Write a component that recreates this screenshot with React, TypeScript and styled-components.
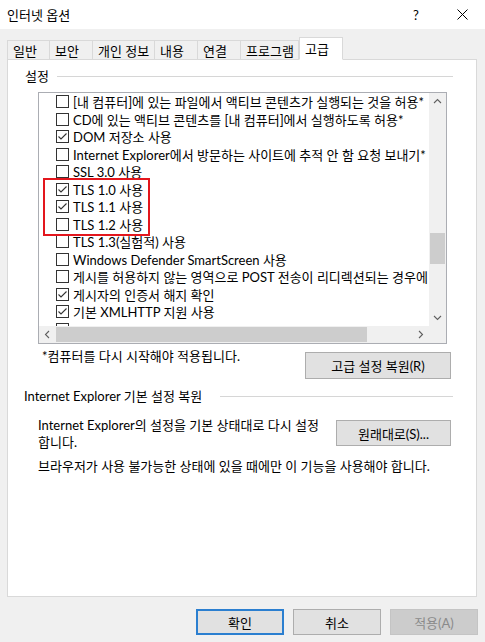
import React from 'react';
import styled, { createGlobalStyle } from 'styled-components';

const GlobalStyle = createGlobalStyle`
  html, body {
    margin: 0;
    padding: 0;
    background: #f0f0f0;
  }
  body {
    font-family: Lato, "Noto Sans CJK KR", sans-serif;
    font-size: 13px;
    color: #000;
  }
  * {
    box-sizing: border-box;
  }
`;

const Window = styled.div`
  width: 485px;
  height: 642px;
  display: flex;
  flex-direction: column;
  background: #f0f0f0;
  overflow: hidden;
`;

const TitleBar = styled.div`
  height: 29px;
  background: #fff;
  display: flex;
  align-items: center;
  padding-left: 7px;
`;

const Title = styled.div`
  flex: 1;
  font-size: 13px;
`;

const TitleButton = styled.div`
  width: 46px;
  height: 29px;
  display: flex;
  align-items: center;
  justify-content: center;
  font-size: 13px;
`;

const Body = styled.div`
  flex: 1;
  display: flex;
  flex-direction: column;
  padding: 8px 7px 7px 7px;
`;

const TabRow = styled.div`
  display: flex;
  align-items: flex-end;
  height: 23px;
  position: relative;
  z-index: 1;
  margin-bottom: -1px;
`;

const Tab = styled.div<{ $width: number; $active?: boolean; $first?: boolean }>`
  width: ${p => p.$width}px;
  height: ${p => (p.$active ? 23 : 20)}px;
  padding-left: 5px;
  display: flex;
  align-items: center;
  background: ${p => (p.$active ? '#fff' : '#f0f0f0')};
  border: 1px solid #d9d9d9;
  border-bottom: ${p => (p.$active ? '1px solid #fff' : '1px solid #d9d9d9')};
  border-left: ${p => (p.$first || p.$active ? '1px solid #d9d9d9' : 'none')};
  white-space: nowrap;
`;

const Panel = styled.div`
  flex: 1;
  margin-right: 1px;
  background: #fff;
  border: 1px solid #d9d9d9;
  padding: 8px 23px 0 17px;
  display: flex;
  flex-direction: column;
`;

const GroupHeader = styled.div`
  display: flex;
  align-items: center;
  height: 17px;
  line-height: 17px;
`;

const GroupLine = styled.div<{ $gap: number }>`
  flex: 1;
  height: 1px;
  background: #d6d6d6;
  margin-left: ${p => p.$gap}px;
  margin-top: -1px;
`;

const ListBox = styled.div`
  position: relative;
  margin: 7px 6px 0 13px;
  height: 252px;
  border: 1px solid #abadb3;
  display: grid;
  grid-template-columns: 1fr 17px;
  grid-template-rows: 1fr 17px;
`;

const ListViewport = styled.div`
  overflow: hidden;
  padding-left: 17px;
`;

const ListItem = styled.div`
  height: 17.5px;
  display: flex;
  align-items: center;
  gap: 4px;
  white-space: nowrap;
`;

const Box = styled.span`
  width: 13px;
  height: 13px;
  flex: none;
  border: 1px solid #333;
  background: #fff;
  display: flex;
  align-items: center;
  justify-content: center;
`;

const VScroll = styled.div`
  background: #f0f0f0;
  display: flex;
  flex-direction: column;
`;

const HScroll = styled.div`
  background: #f0f0f0;
  display: flex;
`;

const Corner = styled.div`
  background: #f0f0f0;
`;

const Arrow = styled.div`
  width: 17px;
  height: 17px;
  flex: none;
  display: flex;
  align-items: center;
  justify-content: center;
`;

const VTrack = styled.div`
  flex: 1;
  padding: 0 1px;
`;

const VThumb = styled.div<{ $offset: number; $size: number }>`
  margin-top: ${p => p.$offset}px;
  height: ${p => p.$size}px;
  background: #cdcdcd;
`;

const HTrack = styled.div`
  flex: 1;
  padding: 1px 0;
  display: flex;
`;

const HThumb = styled.div<{ $size: number }>`
  width: ${p => p.$size}px;
  background: #cdcdcd;
`;

const Highlight = styled.div`
  position: absolute;
  left: 4px;
  top: 85px;
  width: 107px;
  height: 58px;
  border: 2.5px solid #e3161d;
  pointer-events: none;
`;

const ResetRow = styled.div`
  display: flex;
  justify-content: space-between;
  align-items: flex-start;
  margin: 4px 0 0 17px;
  padding-right: 2px;
`;

const Note = styled.div`
  line-height: 17px;
`;

const Button = styled.button<{ $width: number; $default?: boolean }>`
  width: ${p => p.$width}px;
  height: 26px;
  flex: none;
  font-family: inherit;
  font-size: 13px;
  color: #000;
  background: #e1e1e1;
  border: ${p => (p.$default ? '2px solid #2b7fd0' : '1px solid #adadad')};
  padding: 0;
  &:disabled {
    background: #cccccc;
    border-color: #c4c4c4;
    color: #8a8a8a;
  }
`;

const SideButton = styled(Button)`
  margin-top: 4px;
  height: 27px;
`;

const SecondHeader = styled(GroupHeader)`
  margin: 9px 0 0 -1px;
`;

const DescRow = styled.div`
  display: flex;
  justify-content: space-between;
  align-items: flex-start;
  margin: 12px 0 0 13px;
  padding-right: 2px;
`;

const Desc = styled.div`
  line-height: 17px;
`;

const DescButton = styled(Button)`
  margin-top: 3px;
`;

const Warning = styled.div`
  line-height: 17px;
  margin: 7px 0 0 13px;
  white-space: nowrap;
`;

const Footer = styled.div`
  display: flex;
  justify-content: flex-end;
  gap: 9px;
  margin-top: 12px;
`;

const Chevron: React.FC<{ dir: 'up' | 'down' | 'left' | 'right' }> = ({ dir }) => {
  const rot = { up: 0, right: 90, down: 180, left: 270 }[dir];
  return (
    <svg width="9" height="9" viewBox="0 0 9 9" style={{ transform: `rotate(${rot}deg)` }}>
      <polyline points="1,6 4.5,2.5 8,6" fill="none" stroke="#606060" strokeWidth="1.1" />
    </svg>
  );
};

const CheckBox: React.FC<{ checked?: boolean }> = ({ checked }) => (
  <Box>
    {checked && (
      <svg width="11" height="11" viewBox="0 0 11 11">
        <polyline points="1.5,5.5 4,8 9.5,2.5" fill="none" stroke="#333" strokeWidth="1.1" />
      </svg>
    )}
  </Box>
);

const tabs = [
  { label: '일반', width: 43 },
  { label: '보안', width: 43 },
  { label: '개인 정보', width: 62 },
  { label: '내용', width: 43 },
  { label: '연결', width: 43 },
  { label: '프로그램', width: 58 },
  { label: '고급', width: 44, active: true },
];

// last row is only peeking out above the horizontal scrollbar
const options = [
  { label: '[내 컴퓨터]에 있는 파일에서 액티브 콘텐츠가 실행되는 것을 허용*', checked: false },
  { label: 'CD에 있는 액티브 콘텐츠를 [내 컴퓨터]에서 실행하도록 허용*', checked: false },
  { label: 'DOM 저장소 사용', checked: true },
  { label: 'Internet Explorer에서 방문하는 사이트에 추적 안 함 요청 보내기*', checked: false },
  { label: 'SSL 3.0 사용', checked: false },
  { label: 'TLS 1.0 사용', checked: true },
  { label: 'TLS 1.1 사용', checked: true },
  { label: 'TLS 1.2 사용', checked: false },
  { label: 'TLS 1.3(실험적) 사용', checked: false },
  { label: 'Windows Defender SmartScreen 사용', checked: false },
  { label: '게시를 허용하지 않는 영역으로 POST 전송이 리디렉션되는 경우에 경고', checked: false },
  { label: '게시자의 인증서 해지 확인', checked: true },
  { label: '기본 XMLHTTP 지원 사용', checked: true },
  { label: '', checked: false },
];

const App: React.FC = () => {
  return (
    <Window>
      <GlobalStyle />
      <TitleBar>
        <Title>인터넷 옵션</Title>
        <TitleButton>?</TitleButton>
        <TitleButton>
          <svg width="11" height="11" viewBox="0 0 11 11">
            <path d="M0.5 0.5 L10.5 10.5 M10.5 0.5 L0.5 10.5" stroke="#000" strokeWidth="1" />
          </svg>
        </TitleButton>
      </TitleBar>

      <Body>
        <TabRow>
          {tabs.map((t, i) => (
            <Tab key={t.label} $width={t.width} $active={t.active} $first={i === 0}>
              {t.label}
            </Tab>
          ))}
        </TabRow>

        <Panel>
          <GroupHeader>
            설정
            <GroupLine $gap={8} />
          </GroupHeader>

          <ListBox>
            <ListViewport>
              {options.map((o, i) => (
                <ListItem key={i}>
                  <CheckBox checked={o.checked} />
                  {o.label}
                </ListItem>
              ))}
            </ListViewport>
            <VScroll>
              <Arrow><Chevron dir="up" /></Arrow>
              <VTrack>
                <VThumb $offset={123} $size={31} />
              </VTrack>
              <Arrow><Chevron dir="down" /></Arrow>
            </VScroll>
            <HScroll>
              <Arrow><Chevron dir="left" /></Arrow>
              <HTrack>
                <HThumb $size={311} />
              </HTrack>
              <Arrow><Chevron dir="right" /></Arrow>
            </HScroll>
            <Corner />
            <Highlight />
          </ListBox>

          <ResetRow>
            <Note>*컴퓨터를 다시 시작해야 적용됩니다.</Note>
            <SideButton $width={146}>고급 설정 복원(R)</SideButton>
          </ResetRow>

          <SecondHeader>
            Internet Explorer 기본 설정 복원
            <GroupLine $gap={18} />
          </SecondHeader>

          <DescRow>
            <Desc>
              Internet Explorer의 설정을 기본 상태대로 다시 설정
              <br />
              합니다.
            </Desc>
            <DescButton $width={115}>원래대로(S)...</DescButton>
          </DescRow>

          <Warning>브라우저가 사용 불가능한 상태에 있을 때에만 이 기능을 사용해야 합니다.</Warning>
        </Panel>

        <Footer>
          <Button $width={88} $default>확인</Button>
          <Button $width={88}>취소</Button>
          <Button $width={88} disabled>적용(A)</Button>
        </Footer>
      </Body>
    </Window>
  );
};

export default App;
